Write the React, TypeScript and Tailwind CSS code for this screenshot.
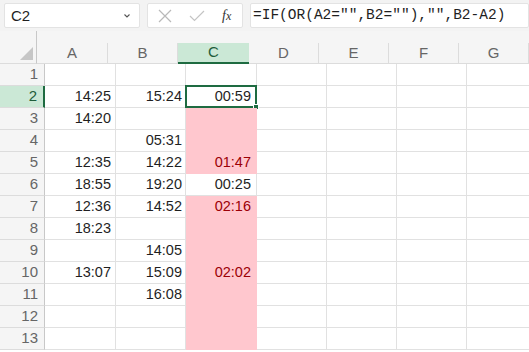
import React from 'react';

const cols = ['A', 'B', 'C', 'D', 'E', 'F', 'G'];
const widths = ['w-[71px]', 'w-[70px]', 'w-[71px]', 'w-[70px]', 'w-[70px]', 'w-[70px]', 'w-[70px]'];

const data: [string, string, string][] = [
  ['', '', ''],
  ['14:25', '15:24', '00:59'],
  ['14:20', '', ''],
  ['', '05:31', ''],
  ['12:35', '14:22', '01:47'],
  ['18:55', '19:20', '00:25'],
  ['12:36', '14:52', '02:16'],
  ['18:23', '', ''],
  ['', '14:05', ''],
  ['13:07', '15:09', '02:02'],
  ['', '16:08', ''],
  ['', '', ''],
  ['', '', ''],
];

export default function App() {
  return (
    <div className="w-[529px] h-[352px] overflow-hidden bg-white font-['Liberation_Sans',Arial,sans-serif] text-[#1f1f1f]">
      {/* formula bar */}
      <div className="flex items-center h-[31px] bg-[#f3f3f3] pl-1 gap-[7px]">
        <div className="flex items-center justify-between w-[136px] h-[25px] bg-white border border-[#e3e3e3] rounded-[2px] pl-[6px] pr-2">
          <span className="text-[15px] leading-none">C2</span>
          <svg width="8" height="6" viewBox="0 0 8 6">
            <path d="M1.5 1.5 L4 4 L6.5 1.5" fill="none" stroke="#555" strokeWidth="1.1" />
          </svg>
        </div>
        <div className="flex items-center w-[96px] h-[25px] bg-white border border-[#e3e3e3] rounded-[2px]">
          <svg width="14" height="14" viewBox="0 0 14 14" className="ml-[10px]">
            <path d="M1 1 L13 13 M13 1 L1 13" stroke="#b9b9b9" strokeWidth="1.2" />
          </svg>
          <svg width="16" height="12" viewBox="0 0 16 12" className="ml-[17px]">
            <path d="M1 6 L5.5 10.5 L15 1" fill="none" stroke="#c4c4c4" strokeWidth="1.2" />
          </svg>
          <span className="ml-[17px] font-['Liberation_Serif',serif] italic text-[14px] text-[#333]">
            f<span className="text-[12px]">x</span>
          </span>
        </div>
        <div className="flex items-center flex-1 h-[25px] bg-white border border-[#e3e3e3] rounded-[2px] pl-[2px]">
          <span className="font-['Liberation_Mono',monospace] text-[14.5px] leading-none whitespace-nowrap">
            =IF(OR(A2="",B2=""),"",B2-A2)
          </span>
        </div>
      </div>

      {/* header */}
      <div className="flex h-[33px] bg-[#f5f5f5]">
        <div className="relative w-[45px] h-full border-r border-[#c8c8c8] border-b border-b-[#dcdcdc]">
          <div className="absolute right-[3px] bottom-[3px] w-0 h-0 border-l-[13px] border-l-transparent border-b-[13px] border-b-[#c6c6c6]" />
        </div>
        <div className="flex flex-col">
          <div className="h-[12px]" />
          <div className="flex h-[21px]">
            {cols.map((c, i) => (
              <div
                key={c}
                className={`${widths[i]} shrink-0 flex items-center justify-center text-[15px] ${
                  c === 'C'
                    ? 'bg-[#cbe8d6] text-[#1f5d3a] border-b-2 border-[#1e6b41]'
                    : 'text-[#666] border-r border-[#dcdcdc] border-b border-b-[#dcdcdc]'
                }`}
              >
                {c}
              </div>
            ))}
          </div>
        </div>
      </div>

      {/* rows */}
      {data.map((row, r) => {
        const n = r + 1;
        const pink = n >= 3 && n !== 6;
        const red = pink && row[2] !== '';
        return (
          <div key={n} className="flex h-[22px]">
            <div
              className={`w-[45px] shrink-0 flex items-center justify-end pr-[6px] text-[15px] border-b border-[#dcdcdc] ${
                n === 2
                  ? 'bg-[#cbe8d6] text-[#1f5d3a] border-r-2 border-r-[#1e6b41]'
                  : 'bg-[#f5f5f5] text-[#666] border-r border-r-[#c8c8c8]'
              }`}
            >
              {n}
            </div>
            <div className="w-[71px] shrink-0 flex items-center justify-end pr-[4px] text-[14.5px] border-r border-b border-[#e1e1e1]">
              {row[0]}
            </div>
            <div className="w-[70px] shrink-0 flex items-center justify-end pr-[3px] text-[14.5px] border-r border-b border-[#e1e1e1]">
              {row[1]}
            </div>
            <div
              className={`relative w-[71px] shrink-0 flex items-center justify-end pr-[5px] text-[14.5px] border-r border-b ${
                pink ? 'bg-[#ffc7ce] border-[#ffc7ce]' : 'border-[#e1e1e1]'
              } ${red ? 'text-[#9c0006]' : ''}`}
            >
              {row[2]}
              {n === 2 && (
                <div className="absolute -left-px -top-px w-[72px] h-[23px] border-2 border-[#1e6b41]">
                  <div className="absolute -right-[4px] -bottom-[4px] w-[6px] h-[6px] bg-[#1e6b41] border border-white" />
                </div>
              )}
            </div>
            {[0, 1, 2, 3].map((k) => (
              <div key={k} className="w-[70px] shrink-0 border-r border-b border-[#e1e1e1]" />
            ))}
          </div>
        );
      })}
    </div>
  );
}
